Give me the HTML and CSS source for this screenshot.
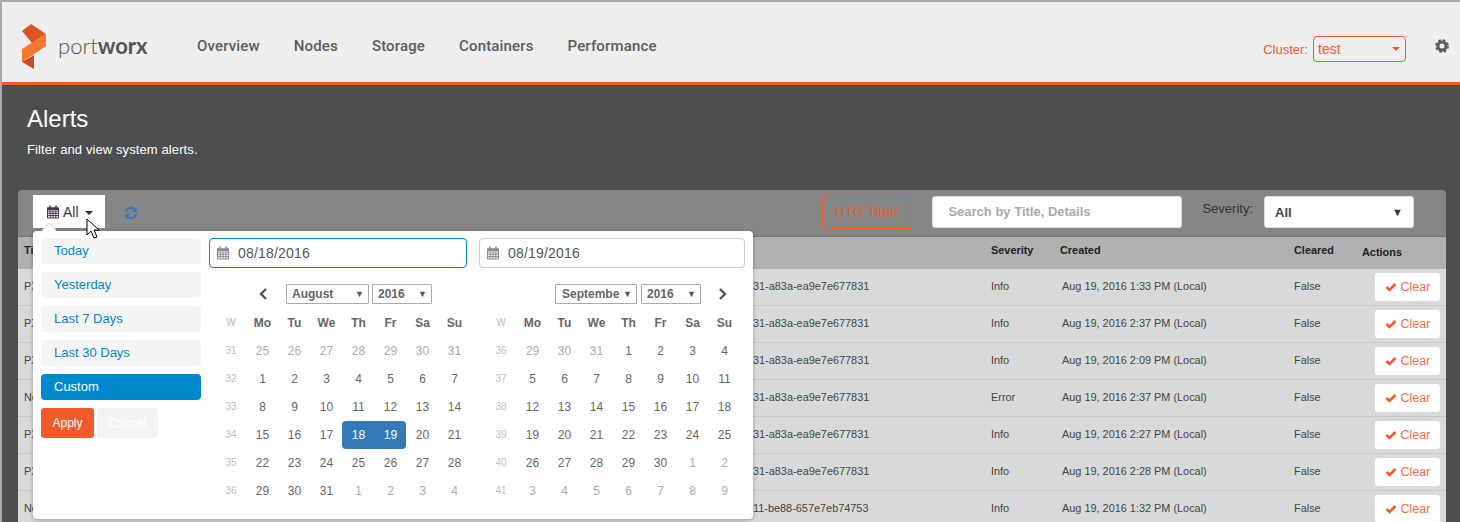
FILE: index.html
```html
<!DOCTYPE html>
<html lang="en">
<head>
  <meta charset="UTF-8">
  <title>Portworx - Alerts</title>
  <link rel="stylesheet" href="styles.css">
</head>
<body>
  <header class="topbar">
    <a class="logo" href="#">
      <svg class="logo-mark" width="26" height="46" viewBox="23 24 26 46">
        <polygon points="23,31 32,24 47,34 33,43" fill="#dd5526"/>
        <polygon points="47,34 47,46 23,62 23,49" fill="#f4792f"/>
        <polygon points="23,62 35,55 35,69" fill="#c64e27"/>
      </svg>
      <span class="logo-text">port<b>worx</b></span>
    </a>
    <nav class="nav">
      <a href="#">Overview</a>
      <a href="#">Nodes</a>
      <a href="#">Storage</a>
      <a href="#">Containers</a>
      <a href="#">Performance</a>
    </nav>
    <div class="cluster">
      <span>Cluster:</span>
      <div class="cluster-select">test<i class="caret"></i></div>
    </div>
    <svg class="gear" width="14" height="14" viewBox="0 0 14 14">
      <circle cx="7" cy="7" r="4" fill="none" stroke="#5b5d60" stroke-width="3"/>
      <circle cx="7" cy="7" r="5.7" fill="none" stroke="#5b5d60" stroke-width="2.4" stroke-dasharray="2.6 1.88"/>
    </svg>
  </header>

  <section class="intro">
    <h1>Alerts</h1>
    <p>Filter and view system alerts.</p>
  </section>

  <section class="panel">
    <div class="toolbar">
      <button class="range-btn">
        <svg width="14" height="14" viewBox="0 0 14 14"><use href="#cal"/></svg>
        All<i class="caret dark"></i>
      </button>
      <svg class="refresh" width="14" height="14" viewBox="0 0 14 14">
        <path d="M2 6a5 5 0 0 1 8.6-2.6" fill="none" stroke="#337ab7" stroke-width="2"/>
        <polygon points="12.6,1 12.6,6 7.8,6" fill="#337ab7"/>
        <path d="M12 8a5 5 0 0 1-8.6 2.6" fill="none" stroke="#337ab7" stroke-width="2"/>
        <polygon points="1.4,13 1.4,8 6.2,8" fill="#337ab7"/>
      </svg>
      <button class="utc-btn">UTC Time</button>
      <input class="search" type="text" placeholder="Search by Title, Details">
      <label class="severity-label">Severity:</label>
      <div class="severity-select">All<span>▼</span></div>
    </div>

    <table class="alerts">
      <colgroup>
        <col class="c-title"><col class="c-details"><col class="c-severity">
        <col class="c-created"><col class="c-cleared"><col class="c-actions">
      </colgroup>
      <thead>
        <tr><th>Ti</th><th></th><th>Severity</th><th>Created</th><th>Cleared</th><th><span class="actions-head">Actions</span></th></tr>
      </thead>
      <tbody>
        <tr><td>PX</td><td class="details">31-a83a-ea9e7e677831</td><td>Info</td><td class="created">Aug 19, 2016 1:33 PM (Local)</td><td>False</td><td><button class="clear"><svg width="12" height="10" viewBox="0 0 12 10"><use href="#check"/></svg>Clear</button></td></tr>
        <tr><td>PX</td><td class="details">31-a83a-ea9e7e677831</td><td>Info</td><td class="created">Aug 19, 2016 2:37 PM (Local)</td><td>False</td><td><button class="clear"><svg width="12" height="10" viewBox="0 0 12 10"><use href="#check"/></svg>Clear</button></td></tr>
        <tr><td>PX</td><td class="details">31-a83a-ea9e7e677831</td><td>Info</td><td class="created">Aug 19, 2016 2:09 PM (Local)</td><td>False</td><td><button class="clear"><svg width="12" height="10" viewBox="0 0 12 10"><use href="#check"/></svg>Clear</button></td></tr>
        <tr><td>No</td><td class="details">31-a83a-ea9e7e677831</td><td>Error</td><td class="created">Aug 19, 2016 2:37 PM (Local)</td><td>False</td><td><button class="clear"><svg width="12" height="10" viewBox="0 0 12 10"><use href="#check"/></svg>Clear</button></td></tr>
        <tr><td>PX</td><td class="details">31-a83a-ea9e7e677831</td><td>Info</td><td class="created">Aug 19, 2016 2:27 PM (Local)</td><td>False</td><td><button class="clear"><svg width="12" height="10" viewBox="0 0 12 10"><use href="#check"/></svg>Clear</button></td></tr>
        <tr><td>PX</td><td class="details">31-a83a-ea9e7e677831</td><td>Info</td><td class="created">Aug 19, 2016 2:28 PM (Local)</td><td>False</td><td><button class="clear"><svg width="12" height="10" viewBox="0 0 12 10"><use href="#check"/></svg>Clear</button></td></tr>
        <tr><td>No</td><td class="details">11-be88-657e7eb74753</td><td>Info</td><td class="created">Aug 19, 2016 1:32 PM (Local)</td><td>False</td><td><button class="clear"><svg width="12" height="10" viewBox="0 0 12 10"><use href="#check"/></svg>Clear</button></td></tr>
      </tbody>
    </table>

    <div class="popover">
      <i class="notch"></i>
      <ul class="ranges">
        <li>Today</li>
        <li>Yesterday</li>
        <li>Last 7 Days</li>
        <li>Last 30 Days</li>
        <li class="active">Custom</li>
        <li class="range-actions">
          <button class="apply">Apply</button>
          <button class="cancel">Cancel</button>
        </li>
      </ul>

      <div class="calendar cal-left">
        <label class="date-input focus">
          <svg width="14" height="14" viewBox="0 0 14 14"><use href="#cal-grey"/></svg>
          <input type="text" value="08/18/2016">
        </label>
        <div class="cal-head">
          <svg class="chev" width="10" height="14" viewBox="0 0 10 14"><path d="M8 2 3 7l5 5" fill="none" stroke="#555" stroke-width="2.4"/></svg>
          <div class="pick month">August<span>▼</span></div>
          <div class="pick year">2016<span>▼</span></div>
        </div>
        <div class="days">
          <b class="wk">W</b><b>Mo</b><b>Tu</b><b>We</b><b>Th</b><b>Fr</b><b>Sa</b><b>Su</b>
          <em>31</em><s>25</s><s>26</s><s>27</s><s>28</s><s>29</s><s>30</s><s>31</s>
          <em>32</em><span>1</span><span>2</span><span>3</span><span>4</span><span>5</span><span>6</span><span>7</span>
          <em>33</em><span>8</span><span>9</span><span>10</span><span>11</span><span>12</span><span>13</span><span>14</span>
          <em>34</em><span>15</span><span>16</span><span>17</span><span class="sel-start">18</span><span class="sel-end">19</span><span>20</span><span>21</span>
          <em>35</em><span>22</span><span>23</span><span>24</span><span>25</span><span>26</span><span>27</span><span>28</span>
          <em>36</em><span>29</span><span>30</span><span>31</span><s>1</s><s>2</s><s>3</s><s>4</s>
        </div>
      </div>

      <div class="calendar cal-right">
        <label class="date-input">
          <svg width="14" height="14" viewBox="0 0 14 14"><use href="#cal-grey"/></svg>
          <input type="text" value="08/19/2016">
        </label>
        <div class="cal-head">
          <div class="pick month">Septembe<span>▼</span></div>
          <div class="pick year">2016<span>▼</span></div>
          <svg class="chev" width="10" height="14" viewBox="0 0 10 14"><path d="M2 2l5 5-5 5" fill="none" stroke="#555" stroke-width="2.4"/></svg>
        </div>
        <div class="days">
          <b class="wk">W</b><b>Mo</b><b>Tu</b><b>We</b><b>Th</b><b>Fr</b><b>Sa</b><b>Su</b>
          <em>36</em><s>29</s><s>30</s><s>31</s><span>1</span><span>2</span><span>3</span><span>4</span>
          <em>37</em><span>5</span><span>6</span><span>7</span><span>8</span><span>9</span><span>10</span><span>11</span>
          <em>38</em><span>12</span><span>13</span><span>14</span><span>15</span><span>16</span><span>17</span><span>18</span>
          <em>39</em><span>19</span><span>20</span><span>21</span><span>22</span><span>23</span><span>24</span><span>25</span>
          <em>40</em><span>26</span><span>27</span><span>28</span><span>29</span><span>30</span><s>1</s><s>2</s>
          <em>41</em><s>3</s><s>4</s><s>5</s><s>6</s><s>7</s><s>8</s><s>9</s>
        </div>
      </div>
    </div>
  </section>

  <svg class="cursor" width="14" height="22" viewBox="0 0 14 22">
    <path d="M1 1v16l4-4 3 7 3-1-3-7h5z" fill="#fff" stroke="#000" stroke-width="1"/>
  </svg>

  <svg class="defs" width="0" height="0">
    <symbol id="cal" viewBox="0 0 14 14">
      <path d="M1.5 3h11v10h-11zM1.5 6h11M1.5 8.3h11M1.5 10.6h11M4.2 6v7M7 6v7M9.8 6v7" fill="none" stroke="#4a3550" stroke-width="1"/>
      <path d="M1 2.500h12v2.500h-12z" fill="#4a3550"/>
      <path d="M4 .5v3M10 .5v3" stroke="#4a3550" stroke-width="1.600"/>
    </symbol>
    <symbol id="cal-grey" viewBox="0 0 14 14">
      <path d="M1.500 3h11v10h-11zM1.500 6h11M1.500 8.300h11M1.500 10.600h11M4.200 6v7M7 6v7M9.800 6v7" fill="none" stroke="#8a8a8a" stroke-width="1"/>
      <path d="M1 2.500h12v2.500h-12z" fill="#8a8a8a"/>
      <path d="M4 .5v3M10 .5v3" stroke="#8a8a8a" stroke-width="1.600"/>
    </symbol>
    <symbol id="check" viewBox="0 0 12 10">
      <path d="M1.500 5 4.500 8 10.500 2" fill="none" stroke="#f15a2b" stroke-width="2.600"/>
    </symbol>
  </svg>
</body>
</html>
```

FILE: styles.css
```css
* {
  box-sizing: border-box;
}

html, body {
  height: 100%;
  overflow: hidden;
}

body {
  margin: 0;
  background-color: #4d4e50;
  font-family: 'Liberation Sans', Arial, sans-serif;
  font-size: 10.9px;
  color: #444;
  border-left: 2px solid #a9a9a9;
  position: relative;
}

button {
  font-family: inherit;
  cursor: pointer;
}

/* top bar */
.topbar {
  height: 85px;
  background-color: #eee;
  border-top: 2px solid #a9a9a9;
  border-bottom: 3px solid #f15a2b;
  display: flex;
  align-items: center;
  padding: 8px 0 0 20px;
}

.logo {
  display: flex;
  align-items: center;
  gap: 10px;
  width: 175px;
  margin-top: 1px;
  text-decoration: none;
}

.logo-text {
  font-family: 'Lato', sans-serif;
  font-weight: 300;
  font-size: 22px;
  color: #555;
  position: relative;
  top: -1px;
}

.logo-text b {
  font-weight: 700;
}

.nav {
  display: flex;
  gap: 34px;
}

.nav a {
  font-family: 'Roboto', sans-serif;
  font-size: 15px;
  font-weight: 500;
  letter-spacing: 0.15px;
  color: #5b5d60;
  text-decoration: none;
}

.cluster {
  margin-left: auto;
  display: flex;
  align-items: center;
  gap: 5px;
  font-size: 13px;
  color: #f15a2b;
  margin-top: 6px;
}

.cluster-select {
  width: 93px;
  height: 26px;
  border: 1px solid #f15a2b;
  border-radius: 4px;
  padding-left: 4px;
  font-size: 14px;
  line-height: 24px;
  display: flex;
  align-items: center;
  justify-content: space-between;
  padding-right: 5px;
}

.caret {
  width: 0;
  height: 0;
  border-left: 4px solid transparent;
  border-right: 4px solid transparent;
  border-top: 4px solid #f15a2b;
}

.caret.dark {
  border-top-color: #333;
  margin-left: 3px;
  margin-top: 2px;
}

.gear {
  margin-left: 29px;
  margin-right: 11px;
  margin-top: -1px;
}

/* page title */
.intro {
  height: 105px;
  padding: 20px 0 0 25px;
  color: #fff;
}

.intro h1 {
  margin: 0;
  font-size: 24px;
  font-weight: 400;
  line-height: 28px;
}

.intro p {
  margin: 9px 0 0;
  font-size: 13px;
  line-height: 16px;
  letter-spacing: 0.1px;
}

/* alerts panel */
.panel {
  position: relative;
  margin: 0 14px 0 16px;
  border-radius: 4px 4px 0 0;
  background-color: #868686;
}

.toolbar {
  height: 47px;
  display: flex;
  align-items: flex-start;
  padding-top: 5px;
  padding-left: 15px;
  border-bottom: 1px solid #777;
}

.range-btn {
  width: 72px;
  height: 33px;
  background-color: #fff;
  border: none;
  font-size: 14px;
  color: #333;
  display: flex;
  align-items: center;
  padding: 0 0 0 13px;
  gap: 3px;
}

.refresh {
  margin: 11px 0 0 19px;
}

.utc-btn {
  margin-left: auto;
  width: 90px;
  height: 34px;
  background: transparent;
  border: 1px solid #f15a2b;
  border-radius: 3px;
  color: #f15a2b;
  font-size: 14px;
  margin-right: 20px;
  padding: 0 2px 0 0;
}

.search {
  width: 250px;
  height: 32px;
  margin-top: 1px;
  border: 1px solid #ddd;
  border-radius: 3px;
  padding: 0 15px 2px;
  font-family: inherit;
  font-size: 13px;
  font-weight: 700;
  outline: none;
}

.search::placeholder {
  color: #aaa;
  opacity: 1;
}

.severity-label {
  margin: 6px 11px 0 20px;
  font-size: 13px;
  color: #333;
}

.severity-select {
  width: 150px;
  height: 32px;
  margin: 1px 32px 0 0;
  background-color: #fff;
  border: 1px solid #ddd;
  border-radius: 3px;
  padding: 0 10px;
  font-size: 13px;
  font-weight: 700;
  color: #444;
  display: flex;
  align-items: center;
  justify-content: space-between;
}

.severity-select span {
  font-size: 11px;
  color: #333;
}

/* table */
.alerts {
  width: 100%;
  table-layout: fixed;
  border-collapse: separate;
  border-spacing: 0;
}

.c-title { width: 15px; }
.c-details { width: 958px; }
.c-severity { width: 69px; }
.c-created { width: 234px; }
.c-cleared { width: 81px; }

.alerts th {
  height: 32px;
  background-color: #b0b1b2;
  padding: 0 0 6px;
  text-align: left;
  font-size: 10.9px;
  font-weight: 700;
  color: #222;
  overflow: visible;
}

.alerts th:first-child,
.alerts td:first-child {
  padding-left: 6px;
}

.actions-head {
  margin-left: -13px;
  position: relative;
  top: 2px;
}

.alerts td {
  height: 37px;
  background-color: #d8dad9;
  border-bottom: 1px solid #c8cac9;
  padding: 0 0 2px;
  white-space: nowrap;
  overflow: hidden;
}

.alerts td.details {
  padding-left: 720px;
}

.alerts td.created {
  padding-left: 2px;
}

.clear {
  width: 65px;
  height: 28px;
  margin-top: 2px;
  background-color: #fff;
  border: none;
  border-radius: 3px;
  color: #f8694a;
  font-size: 12.5px;
  display: flex;
  align-items: center;
  justify-content: center;
  gap: 4px;
  padding: 0;
}

/* date range popover */
.popover {
  position: absolute;
  top: 41px;
  left: 15px;
  width: 720px;
  height: 288px;
  background-color: #fff;
  border-radius: 4px;
  box-shadow: 0 1px 4px rgba(0, 0, 0, 0.3);
  display: flex;
  padding: 7px 8px;
}

.notch {
  position: absolute;
  top: -5px;
  left: 11px;
  width: 10px;
  height: 10px;
  background-color: #fff;
  transform: rotate(45deg);
  box-shadow: -1px -1px 0 #ddd;
}

.ranges {
  list-style: none;
  margin: 0;
  padding: 0;
  width: 160px;
  font-size: 13px;
  color: #0088cc;
}

.ranges li {
  height: 26px;
  line-height: 26px;
  margin-bottom: 8px;
  padding-left: 13px;
  background-color: #f5f5f5;
  border-radius: 4px;
}

.ranges li.active {
  background-color: #0088cc;
  color: #fff;
}

.ranges li.range-actions {
  background: none;
  padding: 0;
  display: flex;
  gap: 3px;
}

.apply, .cancel {
  height: 30px;
  border: none;
  border-radius: 3px;
  font-size: 12px;
  color: #fff;
  padding: 0;
}

.apply {
  width: 53px;
  background-color: #f15a2b;
}

.cancel {
  width: 61px;
  background-color: #f3f3f3;
}

.calendar {
  display: flex;
  flex-direction: column;
}

.cal-left {
  margin-left: 8px;
  width: 258px;
}

.cal-right {
  margin-left: 12px;
  width: 266px;
}

.date-input {
  height: 30px;
  border: 1px solid #ccc;
  border-radius: 4px;
  display: flex;
  align-items: center;
  padding-left: 6px;
  gap: 8px;
}

.date-input.focus {
  border-color: #0088cc;
}

.date-input input {
  border: none;
  outline: none;
  flex: 1;
  min-width: 0;
  padding: 0;
  font-family: inherit;
  font-size: 14px;
  color: #555;
  letter-spacing: 0.2px;
}

.cal-head {
  display: flex;
  align-items: center;
  height: 20px;
  margin-top: 16px;
}

.cal-left .cal-head {
  padding-left: 49px;
}

.cal-right .cal-head {
  padding-left: 76px;
}

.pick {
  height: 20px;
  border: 1px solid #aaa;
  border-radius: 1px;
  padding: 0 0 0 5px;
  font-size: 12px;
  font-weight: 700;
  color: #666;
  line-height: 18px;
  display: flex;
  justify-content: space-between;
  overflow: hidden;
}

.pick span {
  font-size: 9px;
  padding-right: 4px;
  color: #555;
}

.month {
  width: 83px;
}

.year {
  width: 60px;
  margin-left: 3px;
}

.cal-left .chev {
  margin-right: 18px;
}

.cal-right .month {
  width: 82px;
  padding-left: 6px;
}

.cal-right .year {
  margin-left: 4px;
}

.cal-right .chev {
  margin-left: 17px;
}

.days {
  display: grid;
  grid-template-columns: 37px repeat(7, 32px);
  grid-auto-rows: 28px;
  margin-top: 5px;
  font-size: 12px;
  color: #666;
  text-align: center;
  line-height: 28px;
}

.days b,
.days s,
.days span {
  padding-left: 1px;
}

.days b {
  color: #666;
}

.days .wk {
  color: #ccc;
  font-size: 10px;
  padding-left: 7px;
}

.days em {
  font-style: normal;
  font-size: 10px;
  color: #c0c0c0;
  padding-left: 7px;
}

.days s {
  text-decoration: none;
  color: #aaa;
}

.days .sel-start, .days .sel-end {
  background-color: #337ab7;
  color: #fff;
}

.sel-start {
  border-radius: 4px 0 0 4px;
}

.sel-end {
  border-radius: 0 4px 4px 0;
}

/* mouse pointer in the capture */
.cursor {
  position: absolute;
  top: 218px;
  left: 84px;
}

.defs {
  position: absolute;
}
```
